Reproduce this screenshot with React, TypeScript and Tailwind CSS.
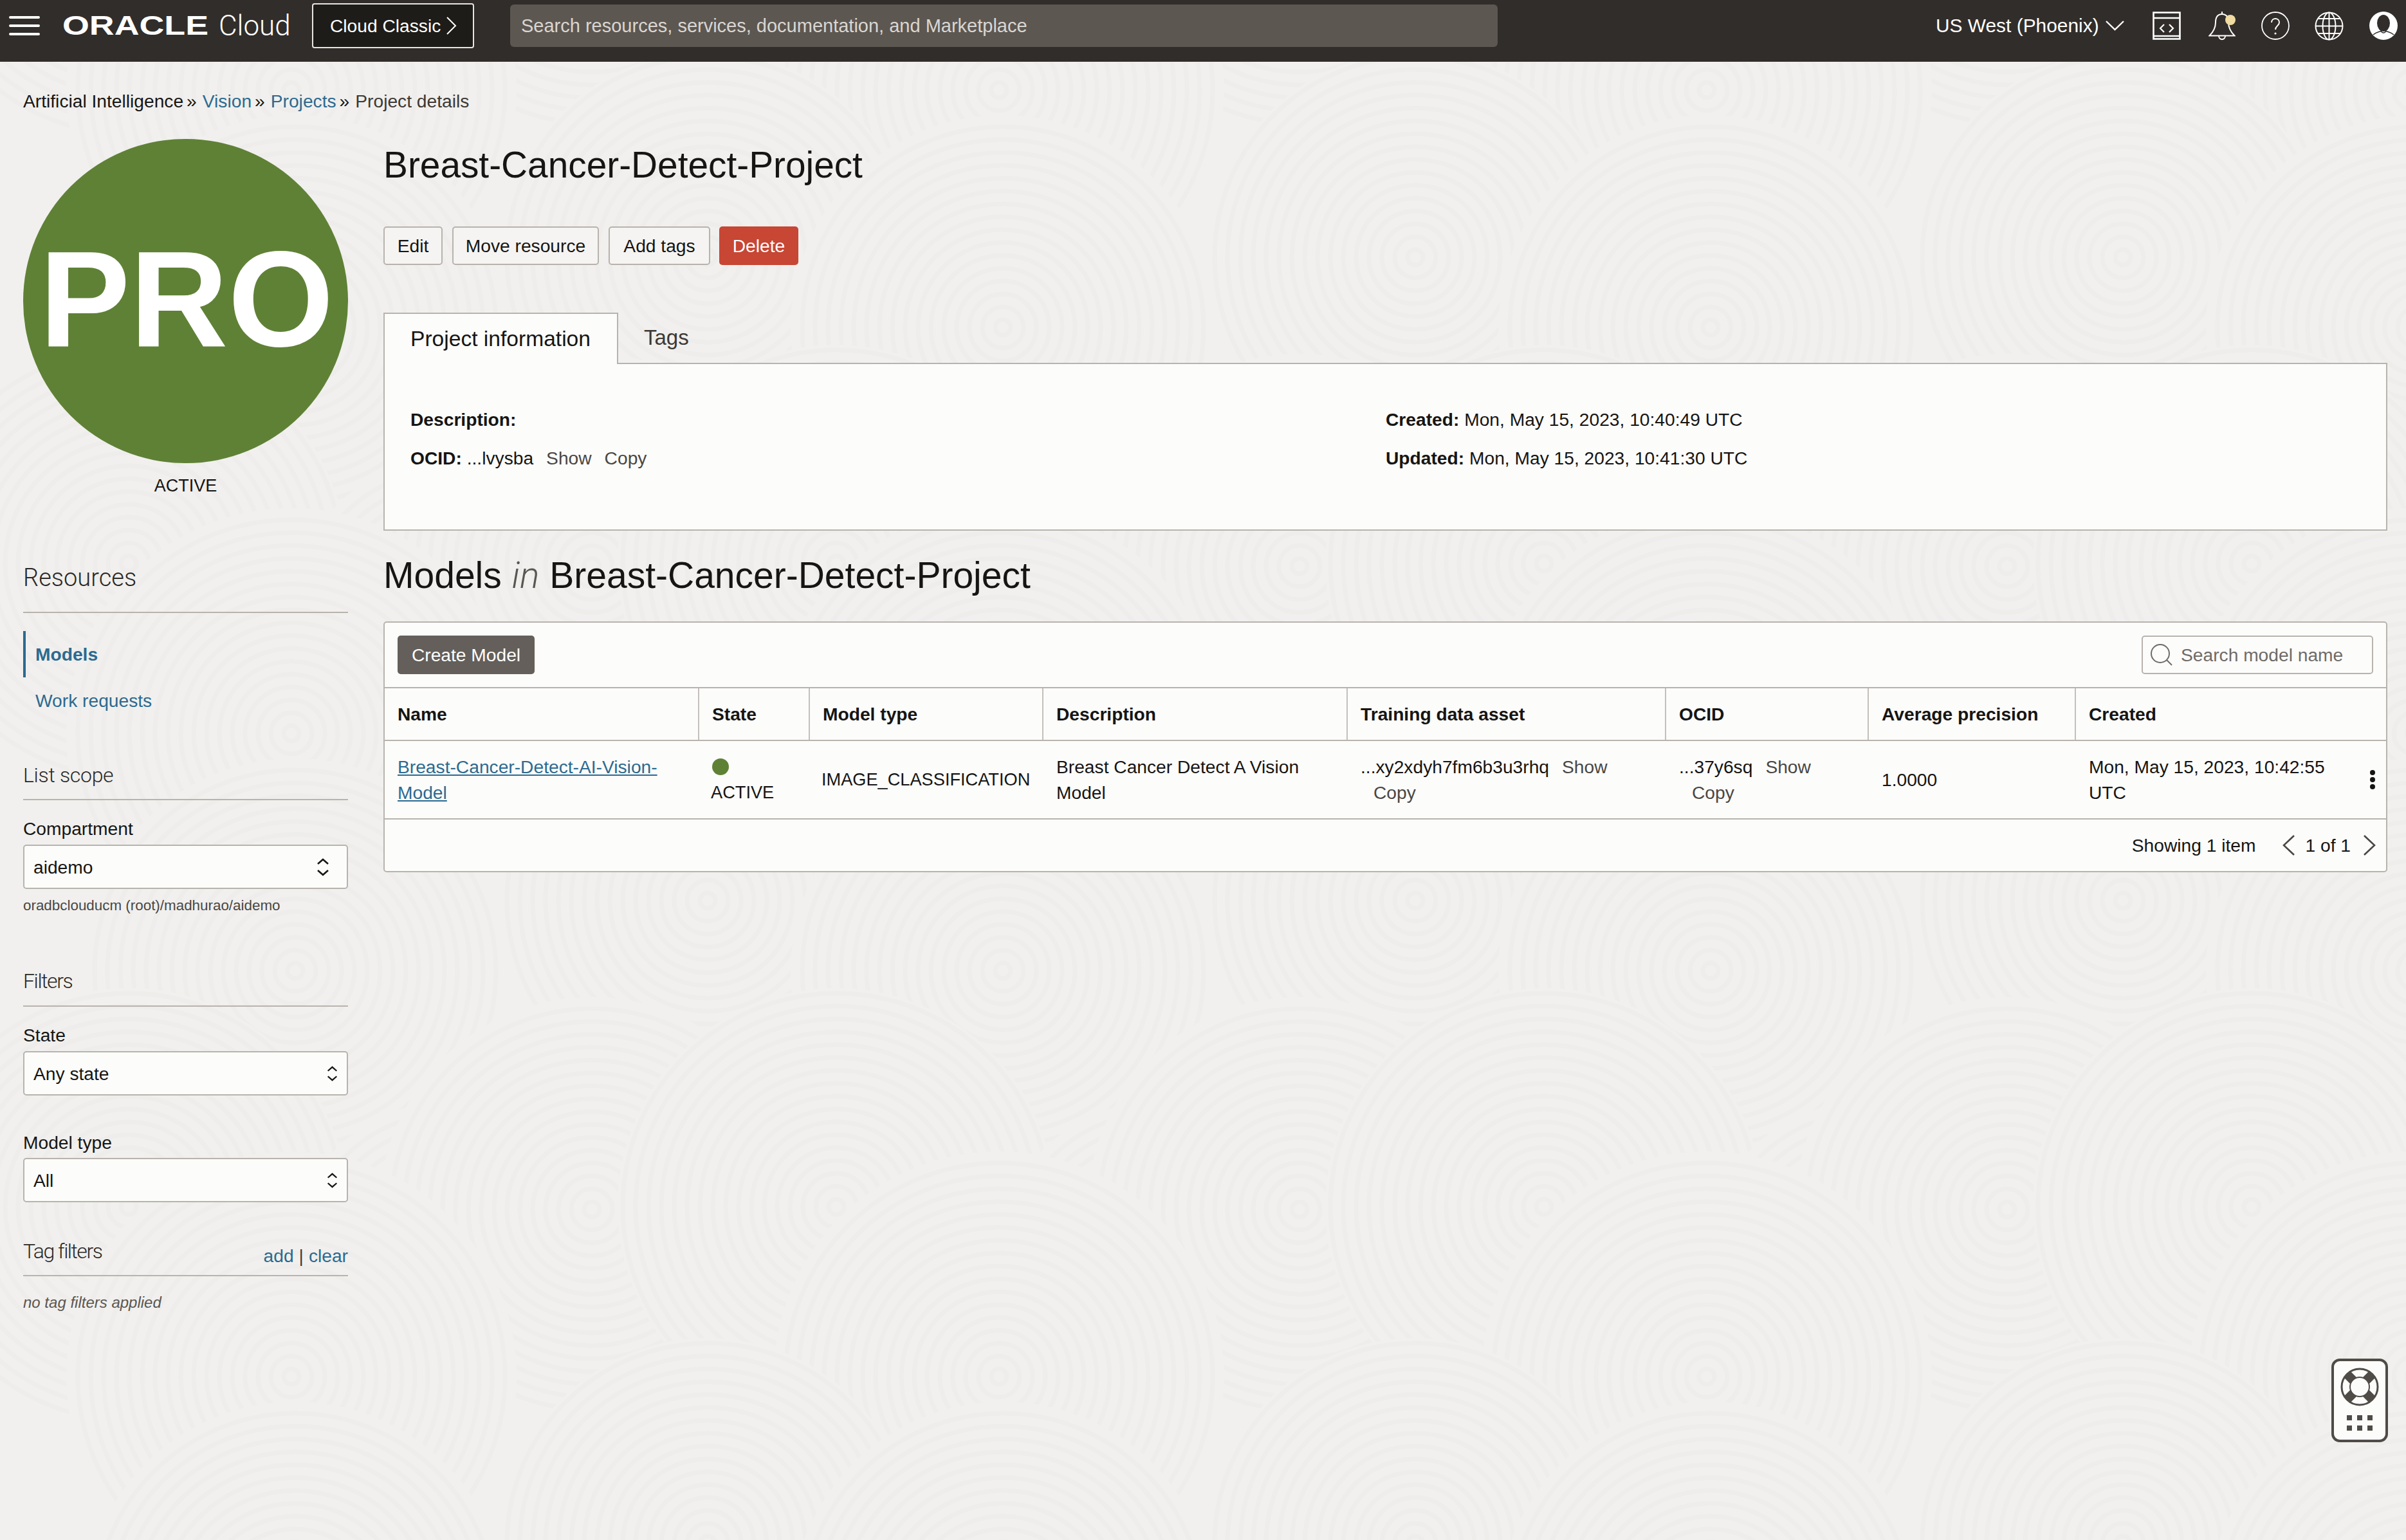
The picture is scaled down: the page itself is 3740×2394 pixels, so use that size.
import React from "react";

const centers = [
  [459, 409, 330],
  [1100, 300, 320],
  [200, 776, 340],
  [700, 862, 250],
  [920, 780, 330],
  [453, 1040, 350],
];
const tiles: number[][] = [];
for (let ty = -1; ty < 3; ty++) {
  for (let tx = 0; tx < 4; tx++) {
    for (const c of centers) tiles.push([c[0] + tx * 1100, c[1] + ty * 1000 + 100, c[2]]);
  }
}

function Swirls() {
  return (
    <svg className="absolute inset-0" width="3740" height="2394" viewBox="0 0 3740 2394" fill="none">
      {tiles.map((t, i) => (
        <g key={i}>
          <circle cx={t[0]} cy={t[1]} r={t[2]} fill="#f1f0ee" />
          {Array.from({ length: Math.floor(t[2] / 20) }, (_, k) => (
            <circle key={k} cx={t[0]} cy={t[1]} r={12 + k * 20} stroke="#eeedeb" strokeWidth="7" />
          ))}
        </g>
      ))}
    </svg>
  );
}

function Updown({ w, h }: { w: number; h: number }) {
  return (
    <svg width={w} height={h} viewBox="0 0 20 30" fill="none" stroke="#161513" strokeWidth="2.6">
      <path d="M2 10 L10 3 L18 10" />
      <path d="M2 20 L10 27 L18 20" />
    </svg>
  );
}

function Select({ label, right, w, h }: { label: string; right: string; w: number; h: number }) {
  return (
    <div className="flex h-[69px] items-center justify-between rounded-[5px] border-2 border-[#b8b3ad] bg-[#fcfcfb] pl-[14px]">
      <span className="pt-[2px] text-[28.2px] text-[#161513]">{label}</span>
      <span className={right}>
        <Updown w={w} h={h} />
      </span>
    </div>
  );
}

function LightHead({ children, size }: { children: React.ReactNode; size: string }) {
  return <div className={`flex h-[40px] items-center font-['Roboto',sans-serif] font-light text-[#2b2825] ${size}`}>{children}</div>;
}

function Btn({ children, cls }: { children: React.ReactNode; cls: string }) {
  return (
    <button className={`flex h-[60px] items-center justify-center rounded-[5px] border-2 border-[#b8b3ad] bg-[#f5f4f2] text-[28.2px] text-[#161513] ${cls}`}>
      {children}
    </button>
  );
}

const cols = "grid grid-cols-[489px_172px_363px_473px_495px_315px_322px_1fr]";

function Th({ children, last }: { children: React.ReactNode; last?: boolean }) {
  return (
    <div className={`flex items-center pl-[20px] text-[28.2px] font-bold text-[#161513] ${last ? "" : "border-r-2 border-[#c4c0bb]"}`}>
      {children}
    </div>
  );
}

export default function App() {
  return (
    <div className="relative h-[2394px] w-[3740px] overflow-hidden bg-[#f1f0ee] font-['Liberation_Sans',Arial,sans-serif] text-[#161513]">
      <Swirls />
      <div className="relative">
        <header className="flex h-[96px] items-center bg-[#312d2a] pb-[16px] text-white">
          <div className="ml-[14px] flex w-[48px] flex-col gap-[9px]">
            <span className="h-[4px] rounded-sm bg-white" />
            <span className="h-[4px] rounded-sm bg-white" />
            <span className="h-[4px] rounded-sm bg-white" />
          </div>
          <div className="ml-[35px] w-[231px] font-bold">
            <span className="inline-block origin-left scale-x-[1.28] text-[42px] leading-none">ORACLE</span>
          </div>
          <span className="ml-[12px] w-[112px] font-['Roboto',sans-serif] text-[44px] font-light leading-none">Cloud</span>
          <div className="ml-[33px] flex h-[70px] w-[252px] items-center rounded-[4px] border-2 border-[#e8e5e0] bg-[#1e1c18] pl-[26px] text-[28.2px]">
            Cloud Classic
            <svg className="ml-[8px]" width="18" height="30" viewBox="0 0 18 30" fill="none" stroke="white" strokeWidth="2">
              <path d="M2 2 L15 15 L2 28" />
            </svg>
          </div>
          <div className="ml-[56px] flex h-[66px] w-[1535px] items-center rounded-[6px] bg-[#5d5751] pl-[17px] pt-[2px] text-[29px] text-[#d9d6d2]">
            Search resources, services, documentation, and Marketplace
          </div>
          <span className="ml-[681px] pt-[1px] text-[29.9px]">US West (Phoenix)</span>
          <svg className="ml-[10px]" width="29" height="16" viewBox="0 0 29 16" fill="none" stroke="white" strokeWidth="2.4">
            <path d="M1 1 L14.5 14 L28 1" />
          </svg>
          <svg className="ml-[44px]" width="44" height="44" viewBox="0 0 44 44" fill="none" stroke="white" strokeWidth="2.6">
            <rect x="1.5" y="1.5" width="41" height="41" />
            <path d="M1.5 10 H42.5 M1.5 38 H42.5" />
            <path d="M18 20 L12 26 L18 32 M26 20 L32 26 L26 32" strokeWidth="2.2" />
          </svg>
          <svg className="ml-[43px]" width="42" height="46" viewBox="0 0 42 46" fill="none" stroke="white" strokeWidth="2">
            <path d="M21 5 C13 5 11 11 11 18 C11 27 7 33 1.5 38.5 H40.5 C35 33 31 27 31 18 C31 11 29 5 21 5Z" />
            <path d="M21 5 V1 M16 38.5 C16 46 26 46 26 38.5" />
            <circle cx="34" cy="14" r="8" fill="#f0dba0" stroke="none" />
          </svg>
          <svg className="ml-[40px]" width="44" height="44" viewBox="0 0 44 44" fill="none" stroke="white" strokeWidth="1.8">
            <circle cx="22" cy="22" r="21" />
            <path d="M16 17 C16 9 28 9 28 17 C28 22 22 22 22 28" strokeWidth="2" />
            <circle cx="22" cy="34" r="1.6" fill="white" stroke="none" />
          </svg>
          <svg className="ml-[39px]" width="45" height="45" viewBox="0 0 45 45" fill="none" stroke="white" strokeWidth="2">
            <circle cx="22.5" cy="22.5" r="21" />
            <ellipse cx="22.5" cy="22.5" rx="10" ry="21" />
            <path d="M22.5 1.5 V43.5 M1.5 22.5 H43.5 M5 11 H40 M5 34 H40" />
          </svg>
          <svg className="ml-[40px]" width="44" height="44" viewBox="0 0 44 44">
            <circle cx="22" cy="22" r="22" fill="white" />
            <ellipse cx="22" cy="18" rx="10" ry="13" fill="#312d2a" />
            <path d="M6 36 C12 31 16 32 18 30 C20 34 24 34 26 30 C28 32 32 31 38 36" fill="none" stroke="#312d2a" strokeWidth="1.6" />
          </svg>
        </header>

        <nav className="ml-[36px] mt-[41px] flex h-[40px] items-center text-[28.2px]">
          <span>Artificial Intelligence</span>
          <span className="ml-[5px] mr-[9px]">»</span>
          <span className="text-[#2c6a90]">Vision</span>
          <span className="ml-[5px] mr-[9px]">»</span>
          <span className="text-[#2c6a90]">Projects</span>
          <span className="ml-[5px] mr-[9px]">»</span>
          <span className="text-[#3d3935]">Project details</span>
        </nav>

        <div className="mt-[39px] flex">
          <aside className="ml-[36px] w-[505px]">
            <div className="flex h-[504px] w-[505px] items-center justify-center rounded-full bg-[#5f8136] pb-[5px] pl-[3px] text-[211px] font-bold leading-none text-white">
              PRO
            </div>
            <div className="mt-[15px] flex h-[40px] items-center justify-center text-[27px]">ACTIVE</div>

            <div className="mt-[103px]">
              <LightHead size="text-[38px]">Resources</LightHead>
            </div>
            <div className="mt-[33px] h-[2px] bg-[#b8b3ad]" />
            <div className="mt-[28px] flex h-[72px] items-center border-l-4 border-[#2c6a90] pl-[15px] text-[28.2px] font-bold text-[#2c6a90]">
              Models
            </div>
            <div className="flex h-[72px] items-center pl-[19px] text-[28.2px] text-[#2c6a90]">Work requests</div>

            <div className="mt-[60px]">
              <LightHead size="text-[32px] tracking-[-0.3px]">List scope</LightHead>
            </div>
            <div className="mt-[17px] h-[2px] bg-[#b8b3ad]" />
            <div className="mt-[24px] flex h-[40px] items-center text-[28.2px]">Compartment</div>
            <div className="mt-[5px]">
              <Select label="aidemo" right="mr-[27px]" w={20} h={30} />
            </div>
            <div className="mt-[11px] flex h-[30px] items-center text-[22.4px] text-[#4a4743]">oradbclouducm (root)/madhurao/aidemo</div>

            <div className="mt-[82px]">
              <LightHead size="text-[32px] tracking-[-1.4px]">Filters</LightHead>
            </div>
            <div className="mt-[18px] h-[2px] bg-[#b8b3ad]" />
            <div className="mt-[24px] flex h-[40px] items-center text-[28.2px]">State</div>
            <div className="mt-[5px]">
              <Select label="Any state" right="mr-[14px]" w={17} h={30} />
            </div>
            <div className="mt-[53px] flex h-[40px] items-center text-[28.2px]">Model type</div>
            <div className="mt-[4px]">
              <Select label="All" right="mr-[14px]" w={17} h={30} />
            </div>
            <div className="mt-[56px] flex items-end justify-between">
              <LightHead size="text-[32px] tracking-[-1.5px]">Tag filters</LightHead>
              <div className="flex h-[26px] items-center text-[28.2px] text-[#2c6a90]">
                add<span className="mx-[8px] text-[#3d3935]">|</span>clear
              </div>
            </div>
            <div className="mt-[17px] h-[2px] bg-[#b8b3ad]" />
            <div className="mt-[21px] flex h-[40px] items-center text-[24px] italic text-[#5a5652]">no tag filters applied</div>
          </aside>

          <main className="ml-[55px] w-[3115px]">
            <h1 className="mt-[11px] flex h-[60px] items-center text-[56.8px] font-normal">Breast-Cancer-Detect-Project</h1>
            <div className="mt-[65px] flex">
              <Btn cls="w-[92px]">Edit</Btn>
              <Btn cls="ml-[15px] w-[228px]">Move resource</Btn>
              <Btn cls="ml-[15px] w-[158px]">Add tags</Btn>
              <button className="ml-[14px] flex h-[60px] w-[123px] items-center justify-center rounded-[5px] bg-[#c74634] text-[28.2px] text-white">Delete</button>
            </div>

            <div className="mt-[74px] flex h-[78px]">
              <div className="relative z-10 flex h-[80px] w-[365px] items-center border-2 border-b-0 border-[#b8b3ad] bg-[#fcfcfb] pl-[40px] text-[33.6px]">
                Project information
              </div>
              <div className="ml-[40px] flex h-[78px] items-center text-[33px] text-[#3d3935]">Tags</div>
            </div>
            <div className="grid h-[261px] grid-cols-[1516px_1fr] border-2 border-[#b8b3ad] bg-[#fcfcfb] pl-[40px] pt-[56px] text-[28.2px]">
              <div>
                <div className="flex h-[60px] items-center font-bold">Description:</div>
                <div className="flex h-[61px] items-center">
                  <b>OCID:</b>&nbsp;...lvysba<span className="ml-[20px] text-[#4a4743]">Show</span>
                  <span className="ml-[20px] text-[#4a4743]">Copy</span>
                </div>
              </div>
              <div>
                <div className="flex h-[60px] items-center">
                  <b>Created:</b>&nbsp;Mon, May 15, 2023, 10:40:49 UTC
                </div>
                <div className="flex h-[61px] items-center">
                  <b>Updated:</b>&nbsp;Mon, May 15, 2023, 10:41:30 UTC
                </div>
              </div>
            </div>

            <h2 className="mt-[35px] flex h-[70px] items-center text-[57px] font-normal">
              Models&nbsp;<i className="font-['Roboto',sans-serif] font-light text-[#5a5652]">in</i>&nbsp;Breast-Cancer-Detect-Project
            </h2>

            <section className="mt-[36px] rounded-[5px] border-2 border-[#b8b3ad] bg-[#fcfcfb]">
              <div className="flex h-[100px] items-center justify-between pl-[20px] pr-[20px]">
                <button className="flex h-[60px] w-[213px] items-center justify-center rounded-[5px] bg-[#645f5a] text-[28.2px] text-white">Create Model</button>
                <div className="flex h-[60px] w-[360px] items-center rounded-[5px] border-2 border-[#b8b3ad] pl-[11px] text-[28.2px] text-[#6f6b67]">
                  <svg width="36" height="36" viewBox="0 0 36 36" fill="none" stroke="#6f6b67" strokeWidth="2">
                    <circle cx="16" cy="16" r="14" />
                    <path d="M26 26 L34 34" />
                  </svg>
                  <span className="ml-[12px]">Search model name</span>
                </div>
              </div>
              <div className={`${cols} h-[84px] border-y-2 border-[#b8b3ad]`}>
                <Th>Name</Th>
                <Th>State</Th>
                <Th>Model type</Th>
                <Th>Description</Th>
                <Th>Training data asset</Th>
                <Th>OCID</Th>
                <Th>Average precision</Th>
                <Th last>Created</Th>
              </div>
              <div className={`${cols} h-[122px] border-b-2 border-[#b8b3ad] text-[28.2px] leading-[40px]`}>
                <div className="self-center pl-[20px] pr-[40px] text-[#2c6a90] underline">Breast-Cancer-Detect-AI-Vision-Model</div>
                <div className="flex flex-col justify-center pl-[20px]">
                  <span className="flex h-[40px] items-center">
                    <span className="h-[26px] w-[26px] rounded-full bg-[#5f8136]" />
                  </span>
                  <span className="-ml-[2px] text-[27.2px]">ACTIVE</span>
                </div>
                <div className="self-center pl-[18px] text-[27.2px]">IMAGE_CLASSIFICATION</div>
                <div className="self-center pl-[20px] pr-[40px]">Breast Cancer Detect A Vision Model</div>
                <div className="self-center pl-[20px]">
                  ...xy2xdyh7fm6b3u3rhq<span className="ml-[20px] text-[#4a4743]">Show</span>
                  <br />
                  <span className="ml-[20px] text-[#4a4743]">Copy</span>
                </div>
                <div className="self-center pl-[20px]">
                  ...37y6sq<span className="ml-[20px] text-[#4a4743]">Show</span>
                  <br />
                  <span className="ml-[20px] text-[#4a4743]">Copy</span>
                </div>
                <div className="self-center pl-[20px]">1.0000</div>
                <div className="flex items-center justify-between pl-[20px] pr-[16px]">
                  <span className="w-[400px]">Mon, May 15, 2023, 10:42:55 UTC</span>
                  <svg width="10" height="30" viewBox="0 0 10 30" fill="#161513">
                    <circle cx="5" cy="4" r="4" />
                    <circle cx="5" cy="15" r="4" />
                    <circle cx="5" cy="26" r="4" />
                  </svg>
                </div>
              </div>
              <div className="flex h-[80px] items-center justify-end pr-[16px] text-[28.2px]">
                <span>Showing 1 item</span>
                <svg className="ml-[42px]" width="20" height="32" viewBox="0 0 20 32" fill="none" stroke="#4a4743" strokeWidth="2.6">
                  <path d="M18 1 L2 16 L18 31" />
                </svg>
                <span className="ml-[15px]">1 of 1</span>
                <svg className="ml-[19px]" width="20" height="32" viewBox="0 0 20 32" fill="none" stroke="#4a4743" strokeWidth="2.6">
                  <path d="M2 1 L18 16 L2 31" />
                </svg>
              </div>
            </section>
          </main>
        </div>
      </div>

      <div className="absolute right-[28px] top-[2112px] h-[130px] w-[88px] rounded-[13px] border-4 border-[#4f4b47] bg-[#fcfcfb]">
        <svg className="absolute -left-[4px] -top-[4px]" width="88" height="130" viewBox="0 0 88 130">
          <circle cx="44" cy="44" r="28" fill="#fcfcfb" stroke="#4f4b47" strokeWidth="3" />
          <path d="M24 24 L64 64 M64 24 L24 64" stroke="#4f4b47" strokeWidth="14" />
          <circle cx="44" cy="44" r="15" fill="#fcfcfb" stroke="#4f4b47" strokeWidth="2" />
          <g fill="#4f4b47">
            <rect x="24" y="88" width="8" height="8" />
            <rect x="40" y="88" width="8" height="8" />
            <rect x="56" y="88" width="8" height="8" />
            <rect x="24" y="104" width="8" height="8" />
            <rect x="40" y="104" width="8" height="8" />
            <rect x="56" y="104" width="8" height="8" />
          </g>
        </svg>
      </div>
    </div>
  );
}
